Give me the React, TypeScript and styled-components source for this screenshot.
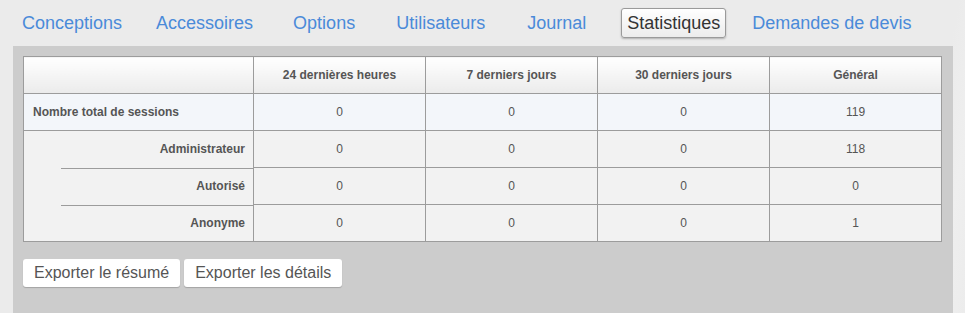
import styled, { createGlobalStyle, css } from 'styled-components';

const GlobalStyle = createGlobalStyle`
  html, body {
    margin: 0;
    padding: 0;
    overflow: hidden;
    background: #ebebeb;
    font-family: 'Liberation Sans', Arial, sans-serif;
  }
`;

export const Page = styled.div`
  min-height: 313px;
  background: linear-gradient(100deg, #ebebeb 0%, #ebebeb 94%, #efefef 97%, #ececec 100%);
`;

export const TabBar = styled.nav`
  display: flex;
  align-items: center;
  height: 46px;
  padding-left: 16px;
  box-sizing: border-box;
`;

export const Tab = styled.button<{ $offset: number; $active?: boolean }>`
  margin-left: ${({ $offset }) => $offset}px;
  height: 30px;
  padding: 0 5px;
  border: 1px solid transparent;
  border-radius: 3px;
  background: transparent;
  font-family: inherit;
  font-size: 18px;
  color: #4a8ad9;
  cursor: pointer;

  ${({ $active }) =>
    $active &&
    css`
      color: #333;
      border-color: #9a9a9a;
      background: linear-gradient(#ffffff, #ececec);
      box-shadow: 0 1px 2px rgba(0, 0, 0, 0.25);
    `}
`;

export const Panel = styled.section`
  margin-left: 13px;
  width: 940px;
  min-height: 267px;
  padding: 10px;
  box-sizing: border-box;
  background: #cccccc;
`;

export const StatsTable = styled.table`
  width: 919px;
  border-collapse: collapse;
  table-layout: fixed;
  border: 1px solid #9c9c9c;
  font-size: 12px;
  color: #555;
`;

export const HeadCell = styled.th`
  height: 36px;
  padding: 0;
  border: 1px solid #9c9c9c;
  background: linear-gradient(#ffffff, #ebebeb);
  font-weight: bold;
  text-align: center;
`;

export const Row = styled.tr<{ $total?: boolean }>`
  background: ${({ $total }) => ($total ? '#f3f6fa' : '#f2f2f2')};
`;

export const LabelCell = styled.td<{ $sub?: boolean; $last?: boolean }>`
  position: relative;
  height: 36px;
  padding: 0 ${({ $sub }) => ($sub ? '8px' : '0')} 0 ${({ $sub }) => ($sub ? '0' : '9px')};
  border: 1px solid #9c9c9c;
  font-weight: bold;
  text-align: ${({ $sub }) => ($sub ? 'right' : 'left')};

  ${({ $sub, $last }) =>
    $sub &&
    css`
      border-top: none;
      border-bottom: ${$last ? '1px solid #9c9c9c' : 'none'};
      &::after {
        content: '';
        display: ${$last ? 'none' : 'block'};
        position: absolute;
        left: 37px;
        right: -1px;
        bottom: -1px;
        border-bottom: 1px solid #9c9c9c;
      }
    `}
`;

export const ValueCell = styled.td`
  height: 36px;
  padding: 0;
  border: 1px solid #9c9c9c;
  text-align: center;
`;

export const Actions = styled.div`
  display: flex;
  gap: 4px;
  margin-top: 17px;
`;

export const ActionButton = styled.button`
  height: 28px;
  padding: 0 11px;
  border: none;
  border-radius: 3px;
  background: #ffffff;
  box-shadow: 0 1px 1px rgba(0, 0, 0, 0.2);
  font-family: inherit;
  font-size: 16px;
  color: #555;
  cursor: pointer;
`;

const tabs = [
  { label: 'Conceptions', offset: 0 },
  { label: 'Accessoires', offset: 22 },
  { label: 'Options', offset: 28 },
  { label: 'Utilisateurs', offset: 29 },
  { label: 'Journal', offset: 30 },
  { label: 'Statistiques', offset: 29, active: true },
  { label: 'Demandes de devis', offset: 20 },
];

const columns = ['24 dernières heures', '7 derniers jours', '30 derniers jours', 'Général'];

const rows = [
  { label: 'Nombre total de sessions', values: [0, 0, 0, 119], total: true },
  { label: 'Administrateur', values: [0, 0, 0, 118] },
  { label: 'Autorisé', values: [0, 0, 0, 0] },
  { label: 'Anonyme', values: [0, 0, 0, 1] },
];

export default function App() {
  return (
    <Page>
      <GlobalStyle />
      <TabBar>
        {tabs.map((t) => (
          <Tab key={t.label} $offset={t.offset} $active={t.active}>
            {t.label}
          </Tab>
        ))}
      </TabBar>
      <Panel>
        <StatsTable>
          <colgroup>
            <col style={{ width: 230 }} />
            <col style={{ width: 172 }} />
            <col style={{ width: 172 }} />
            <col style={{ width: 172 }} />
            <col />
          </colgroup>
          <thead>
            <tr>
              <HeadCell />
              {columns.map((c) => (
                <HeadCell key={c}>{c}</HeadCell>
              ))}
            </tr>
          </thead>
          <tbody>
            {rows.map((r, i) => (
              <Row key={r.label} $total={r.total}>
                <LabelCell $sub={!r.total} $last={i === rows.length - 1}>
                  {r.label}
                </LabelCell>
                {r.values.map((v, j) => (
                  <ValueCell key={j}>{v}</ValueCell>
                ))}
              </Row>
            ))}
          </tbody>
        </StatsTable>
        <Actions>
          <ActionButton>Exporter le résumé</ActionButton>
          <ActionButton>Exporter les détails</ActionButton>
        </Actions>
      </Panel>
    </Page>
  );
}
